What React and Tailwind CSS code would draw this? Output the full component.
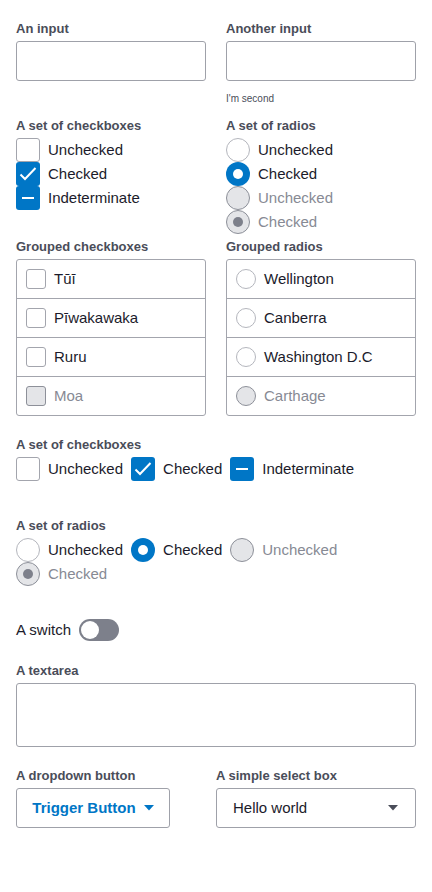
import React from "react";

const Label = ({ children, className = "" }) => (
  <div className={`text-[13px] font-bold text-[#4a4d59] leading-4 ${className}`}>{children}</div>
);

const Check = ({ state = "off", size = "lg", disabled = false }) => {
  const dim = size === "lg" ? "w-6 h-6" : "w-5 h-5";
  if (state === "on" || state === "mixed") {
    return (
      <span className={`${dim} shrink-0 rounded-[3px] bg-[#0076c6] flex items-center justify-center`}>
        {state === "on" ? (
          <svg width="24" height="24" viewBox="0 0 24 24" fill="none">
            <path d="M4.5 12.5l4.5 4.5 10.5-11" stroke="white" strokeWidth="2" />
          </svg>
        ) : (
          <span className="w-[12px] h-[2px] bg-white" />
        )}
      </span>
    );
  }
  return (
    <span
      className={`${dim} shrink-0 rounded-[3px] border ${
        disabled ? "border-[#8d9099] bg-[#e4e5e8]" : "border-[#a3a5ad] bg-white"
      }`}
    />
  );
};

const Radio = ({ state = "off", size = "lg", disabled = false }) => {
  const dim = size === "lg" ? "w-6 h-6" : "w-5 h-5";
  if (state === "on" && !disabled) {
    return (
      <span className={`${dim} shrink-0 rounded-full bg-[#0076c6] flex items-center justify-center`}>
        <span className="w-[10px] h-[10px] rounded-full bg-white" />
      </span>
    );
  }
  return (
    <span
      className={`${dim} shrink-0 rounded-full border flex items-center justify-center ${
        disabled ? "border-[#8d9099] bg-[#e4e5e8]" : "border-[#b4b6bd] bg-white"
      }`}
    >
      {state === "on" && <span className="w-[10px] h-[10px] rounded-full bg-[#7d808b]" />}
    </span>
  );
};

const Item = ({ control, text, disabled, className = "" }) => (
  <div className={`flex items-center h-6 ${className}`}>
    {control}
    <span className={`ml-2 text-[15px] ${disabled ? "text-[#878a94]" : "text-[#1b1b2b]"}`}>{text}</span>
  </div>
);

const GroupRow = ({ control, text, disabled }) => (
  <div className="flex items-center h-[39px] px-[9px] border-t border-[#a3a5ad] first:border-t-0 first:h-[38px]">
    {control}
    <span className={`ml-2 text-[15px] ${disabled ? "text-[#878a94]" : "text-[#1b1b2b]"}`}>{text}</span>
  </div>
);

const Caret = ({ color }) => (
  <svg width="10" height="6" viewBox="0 0 10 6">
    <path d="M0 0h10L5 5.5z" fill={color} />
  </svg>
);

export default function App() {
  return (
    <div className="w-[432px] h-[892px] bg-white px-4 pt-[21px] font-['Liberation_Sans',Arial,sans-serif]">
      <div className="grid grid-cols-2 gap-x-5">
        <div>
          <Label>An input</Label>
          <div className="mt-[4px] h-10 rounded-[3px] border border-[#9fa1a9]" />
        </div>
        <div>
          <Label>Another input</Label>
          <div className="mt-[4px] h-10 rounded-[3px] border border-[#9fa1a9]" />
          <div className="mt-[10px] text-[10px] text-[#4a4d59]">I'm second</div>
        </div>
      </div>

      <div className="grid grid-cols-2 gap-x-5 mt-[12px]">
        <div>
          <Label>A set of checkboxes</Label>
          <div className="mt-[4px]">
            <Item control={<Check />} text="Unchecked" />
            <Item control={<Check state="on" />} text="Checked" />
            <Item control={<Check state="mixed" />} text="Indeterminate" />
          </div>
        </div>
        <div>
          <Label>A set of radios</Label>
          <div className="mt-[4px]">
            <Item control={<Radio />} text="Unchecked" />
            <Item control={<Radio state="on" />} text="Checked" />
            <Item control={<Radio disabled />} text="Unchecked" disabled />
            <Item control={<Radio state="on" disabled />} text="Checked" disabled />
          </div>
        </div>
      </div>

      <div className="grid grid-cols-2 gap-x-5 mt-[5px]">
        <div>
          <Label>Grouped checkboxes</Label>
          <div className="mt-[4px] rounded-[3px] border border-[#a3a5ad]">
            <GroupRow control={<Check size="sm" />} text="Tūī" />
            <GroupRow control={<Check size="sm" />} text="Pīwakawaka" />
            <GroupRow control={<Check size="sm" />} text="Ruru" />
            <GroupRow control={<Check size="sm" disabled />} text="Moa" disabled />
          </div>
        </div>
        <div>
          <Label>Grouped radios</Label>
          <div className="mt-[4px] rounded-[3px] border border-[#a3a5ad]">
            <GroupRow control={<Radio size="sm" />} text="Wellington" />
            <GroupRow control={<Radio size="sm" />} text="Canberra" />
            <GroupRow control={<Radio size="sm" />} text="Washington D.C" />
            <GroupRow control={<Radio size="sm" disabled />} text="Carthage" disabled />
          </div>
        </div>
      </div>

      <Label className="mt-[21px]">A set of checkboxes</Label>
      <div className="mt-[4px] flex flex-wrap gap-x-2">
        <Item control={<Check />} text="Unchecked" />
        <Item control={<Check state="on" />} text="Checked" />
        <Item control={<Check state="mixed" />} text="Indeterminate" />
      </div>

      <Label className="mt-[37px]">A set of radios</Label>
      <div className="mt-[4px] flex flex-wrap gap-x-2 w-[340px]">
        <Item control={<Radio />} text="Unchecked" />
        <Item control={<Radio state="on" />} text="Checked" />
        <Item control={<Radio disabled />} text="Unchecked" disabled />
        <Item control={<Radio state="on" disabled />} text="Checked" disabled />
      </div>

      <div className="mt-[33px] flex items-center h-[22px]">
        <span className="text-[15px] text-[#1b1b2b]">A switch</span>
        <span className="ml-2 w-10 h-[22px] rounded-full bg-[#7d808b] flex items-center px-[2px]">
          <span className="w-[18px] h-[18px] rounded-full bg-white" />
        </span>
      </div>

      <Label className="mt-[22px]">A textarea</Label>
      <div className="mt-[4px] h-16 rounded-[3px] border border-[#9fa1a9]" />

      <div className="mt-[21px] flex gap-x-[46px]">
        <div>
          <Label>A dropdown button</Label>
          <div className="mt-[4px] w-[154px] h-10 rounded-[3px] border border-[#9fa1a9] flex items-center justify-center gap-2">
            <span className="text-[15px] font-bold text-[#0076c6]">Trigger Button</span>
            <Caret color="#0076c6" />
          </div>
        </div>
        <div className="flex-1">
          <Label>A simple select box</Label>
          <div className="mt-[4px] h-10 rounded-[3px] border border-[#9fa1a9] flex items-center justify-between pl-4 pr-[17px]">
            <span className="text-[15px] text-[#1b1b2b]">Hello world</span>
            <Caret color="#4a4d59" />
          </div>
        </div>
      </div>
    </div>
  );
}
